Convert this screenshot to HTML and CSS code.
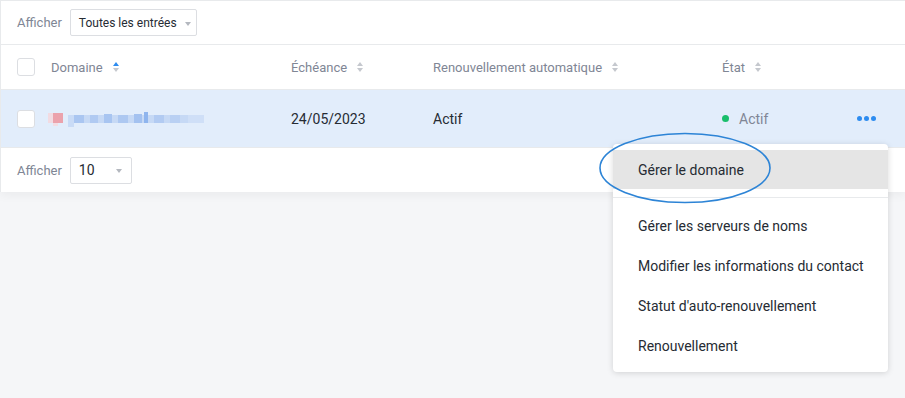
FILE: index.html
```html
<!DOCTYPE html>
<html lang="fr">
<head>
<meta charset="utf-8">
<link rel="stylesheet" href="styles.css">
</head>
<body>
<div class="page">
  <div class="card">
    <div class="toolbar">
      <span class="label">Afficher</span>
      <div class="select wide"><span>Toutes les entrées</span><i class="caret"></i></div>
    </div>
    <div class="row head">
      <div class="c-check"><span class="box"></span></div>
      <div class="c-domain">Domaine <span class="sort active"><i class="up"></i><i class="down"></i></span></div>
      <div class="c-date">Échéance <span class="sort"><i class="up"></i><i class="down"></i></span></div>
      <div class="c-auto">Renouvellement automatique <span class="sort"><i class="up"></i><i class="down"></i></span></div>
      <div class="c-state">État <span class="sort"><i class="up"></i><i class="down"></i></span></div>
    </div>
    <div class="row body">
      <div class="c-check"><span class="box"></span></div>
      <div class="c-domain">
        <svg class="blur" width="156" height="18" viewBox="0 0 156 18">
          <rect x="0" y="2" width="5" height="10" fill="#f2dbe2"/>
          <rect x="5" y="2" width="10" height="10" fill="#eba2ac"/>
          <rect x="5" y="12" width="5" height="3" fill="#f3dde3"/>
          <rect x="20" y="4" width="136" height="8" fill="#c6d9f5"/>
          <rect x="20" y="4" width="6" height="12" fill="#c9dbf6"/>
          <rect x="26" y="4" width="10" height="8" fill="#aac6f1"/>
          <rect x="42" y="4" width="8" height="8" fill="#b0caf2"/>
          <rect x="56" y="3" width="8" height="9" fill="#a8c5f1"/>
          <rect x="70" y="4" width="10" height="8" fill="#adc8f1"/>
          <rect x="86" y="3" width="8" height="9" fill="#a4c2f0"/>
          <rect x="96" y="1" width="4" height="11" fill="#8fb5ee"/>
          <rect x="106" y="4" width="10" height="8" fill="#b2cbf2"/>
          <rect x="122" y="4" width="10" height="8" fill="#b9d0f3"/>
          <rect x="140" y="4" width="16" height="8" fill="#cfdff7"/>
        </svg>
      </div>
      <div class="c-date dark">24/05/2023</div>
      <div class="c-auto dark">Actif</div>
      <div class="c-state"><span class="dot"></span>Actif</div>
      <div class="c-act"><span class="more"><i></i><i></i><i></i></span></div>
    </div>
    <div class="toolbar foot">
      <span class="label">Afficher</span>
      <div class="select narrow"><span>10</span><i class="caret"></i></div>
    </div>
  </div>

  <div class="menu">
    <div class="item hover">Gérer le domaine</div>
    <div class="sep"></div>
    <div class="item">Gérer les serveurs de noms</div>
    <div class="item">Modifier les informations du contact</div>
    <div class="item">Statut d'auto-renouvellement</div>
    <div class="item">Renouvellement</div>
  </div>
  <svg class="ring" width="176" height="74" viewBox="0 0 176 74">
    <ellipse cx="88" cy="37" rx="85" ry="34.5" fill="none" stroke="#2d84d6" stroke-width="1.6"/>
  </svg>
</div>
</body>
</html>
```
FILE: styles.css
```css
* { box-sizing: border-box; }
html, body { margin: 0; padding: 0; }
body {
  background: #f5f6f8;
  font-family: Roboto, "Liberation Sans", Arial, sans-serif;
  color: #333;
  width: 905px;
  height: 398px;
  overflow: hidden;
}
.page { position: relative; width: 905px; height: 398px; }
.card {
  background: #fff;
  border-top: 1px solid #e8eaec;
  border-left: 1px solid #e8eaec;
  box-shadow: 0 3px 10px rgba(0,0,0,0.05);
  height: 192px;
}
.toolbar {
  display: flex;
  align-items: center;
  height: 44px;
  padding-left: 16px;
  border-bottom: 1px solid #e8eaec;
}
.toolbar.foot { border-bottom: none; height: 43px; padding-top: 1px; }
.label { font-size: 13px; color: #808695; margin-right: 8px; white-space: nowrap; }
.select {
  height: 27px;
  border: 1px solid #dcdee2;
  border-radius: 2px;
  display: flex;
  align-items: center;
  justify-content: space-between;
  padding: 0 5px 0 8px;
  font-size: 12px;
  color: #262b33;
  white-space: nowrap;
}
.select.wide { width: 127px; padding-right: 5px; }
.select.narrow { width: 62px; padding-right: 9px; font-size: 14px; }
.caret {
  flex: none;
  width: 0; height: 0;
  border-left: 3.5px solid transparent;
  border-right: 3.5px solid transparent;
  border-top: 4px solid #b4b8bf;
  margin-top: 2px;
}
.row { display: flex; align-items: center; border-bottom: 1px solid #e8eaec; }
.row.head { height: 45px; font-size: 13px; color: #808695; }
.row.body { height: 58px; background: #e2edfb; font-size: 14px; color: #808695; }
.c-check { width: 50px; padding-left: 16px; display: flex; align-items: center; }
.box {
  width: 18px; height: 18px;
  border: 1px solid #dcdee2;
  border-radius: 3px;
  background: #fff;
  display: block;
}
.c-domain { width: 240px; display: flex; align-items: center; }
.row.body .c-domain { margin-left: -3px; width: 243px; }
.blur { display: block; margin-top: 3px; }
.c-date { width: 142px; display: flex; align-items: center; }
.c-auto { width: 289px; display: flex; align-items: center; }
.c-state { width: 135px; display: flex; align-items: center; }
.dark { color: #262b33; }
.sort {
  display: inline-flex;
  flex-direction: column;
  gap: 2px;
  margin-left: 10px;
}
.sort i {
  width: 0; height: 0;
  border-left: 3.5px solid transparent;
  border-right: 3.5px solid transparent;
  display: block;
}
.sort .up { border-bottom: 4.5px solid #c5c8ce; }
.sort .down { border-top: 4.5px solid #c5c8ce; }
.sort.active .up { border-bottom-color: #2d8cf0; }
.dot {
  width: 7px; height: 7px;
  border-radius: 50%;
  background: #19be6b;
  margin-right: 10px;
}
.c-act { display: flex; align-items: center; }
.more { display: flex; gap: 2px; }
.more i { width: 5px; height: 5px; border-radius: 50%; background: #2d8cf0; display: block; }
.menu {
  position: absolute;
  left: 613px;
  top: 144px;
  width: 275px;
  height: 228px;
  background: #fff;
  border-radius: 4px;
  box-shadow: 0 1px 6px rgba(0,0,0,0.15);
  padding-top: 6px;
}
.item {
  height: 40px;
  display: flex;
  align-items: center;
  padding-left: 25px;
  font-size: 14px;
  color: #262b33;
}
.item.hover { background: #e5e5e5; height: 39px; }
.sep { height: 1px; background: #e8eaec; margin: 8px 0 8px; }
.ring { position: absolute; left: 597px; top: 131px; }
```
